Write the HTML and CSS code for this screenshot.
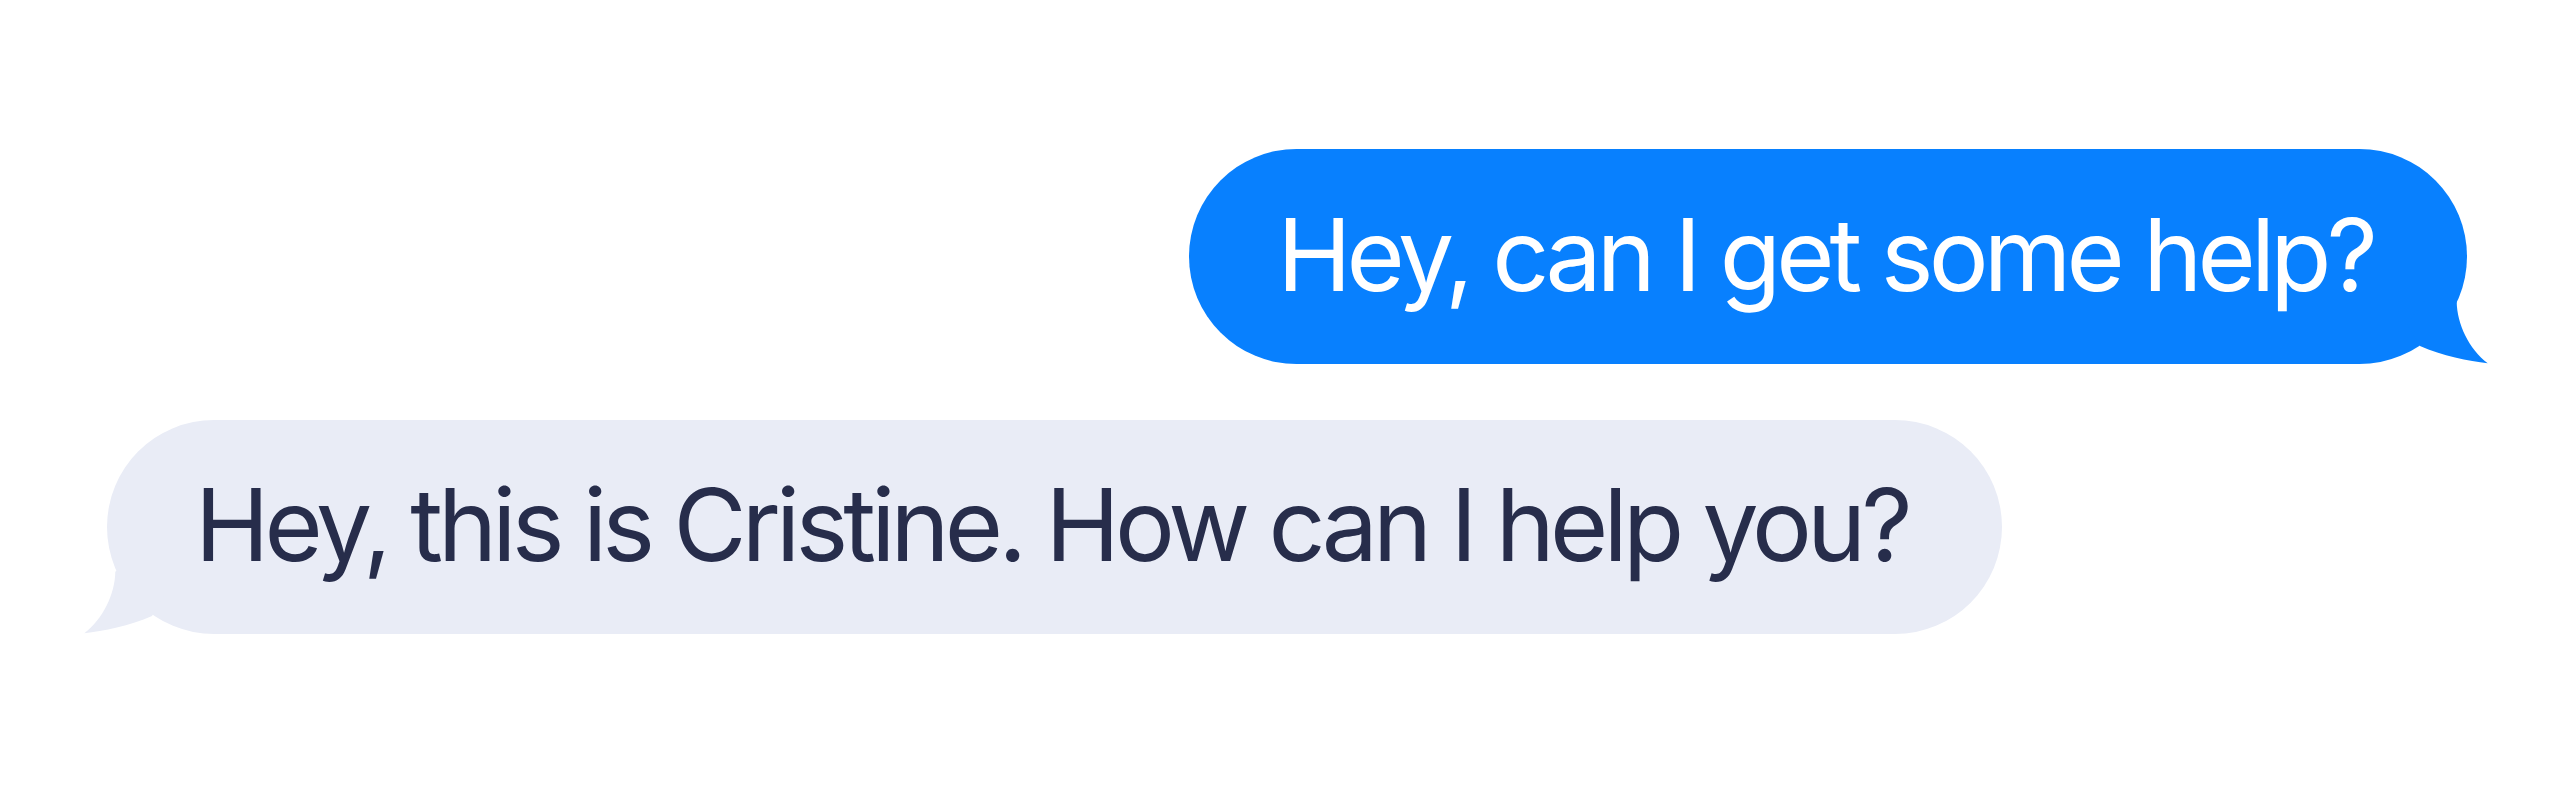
FILE: index.html
```html
<!DOCTYPE html>
<html lang="en">
<head>
<meta charset="utf-8">
<title>Chat</title>
<link rel="stylesheet" href="styles.css">
</head>
<body>
<main class="thread">
  <div class="bubble bubble--out">
    <span class="bubble__text">Hey, can I get some help?</span>
    <svg class="bubble__tail bubble__tail--out" viewBox="0 0 85 80" aria-hidden="true">
      <path d="M30 0 L49.7 17.7 C50 40 62 65 80.7 79.3 C62 77 35 72 13 62 L0 40 Z"/>
    </svg>
  </div>
  <div class="bubble bubble--in">
    <span class="bubble__text">Hey, this is Cristine. How can I help you?</span>
    <svg class="bubble__tail bubble__tail--in" viewBox="0 0 85 80" aria-hidden="true">
      <path d="M30 0 L49.7 17.7 C50 40 62 65 80.7 79.3 C62 77 35 72 13 62 L0 40 Z"/>
    </svg>
  </div>
</main>
</body>
</html>
```

FILE: styles.css
```css
html, body {
  margin: 0;
  padding: 0;
  background: #ffffff;
}

body {
  width: 2560px;
  height: 785px;
  overflow: hidden;
  font-family: "Inter", "Liberation Sans", sans-serif;
}

.thread {
  display: flex;
  flex-direction: column;
  gap: 56px;
  padding: 149px 93px 0 107px;
}

.bubble {
  position: relative;
  display: inline-flex;
  align-items: center;
  height: 215px;
  border-radius: 107.5px;
  padding: 0 94px 4px 88px;
  box-sizing: border-box;
}

.bubble__text {
  font-size: 100px;
  line-height: 1;
  white-space: nowrap;
  letter-spacing: -4.85px;
}

.bubble--out {
  align-self: flex-end;
  background: #0880fe;
  color: #ffffff;
}

.bubble--in {
  align-self: flex-start;
  height: 214px;
  background: #e9ecf6;
  color: #272d4b;
}

.bubble__tail {
  position: absolute;
  bottom: 0;
  width: 85px;
  height: 80px;
}

.bubble__tail--out {
  right: -25px;
  fill: #0880fe;
}

.bubble__tail--in {
  left: -27px;
  fill: #e9ecf6;
  transform: scaleX(-1);
}
```
